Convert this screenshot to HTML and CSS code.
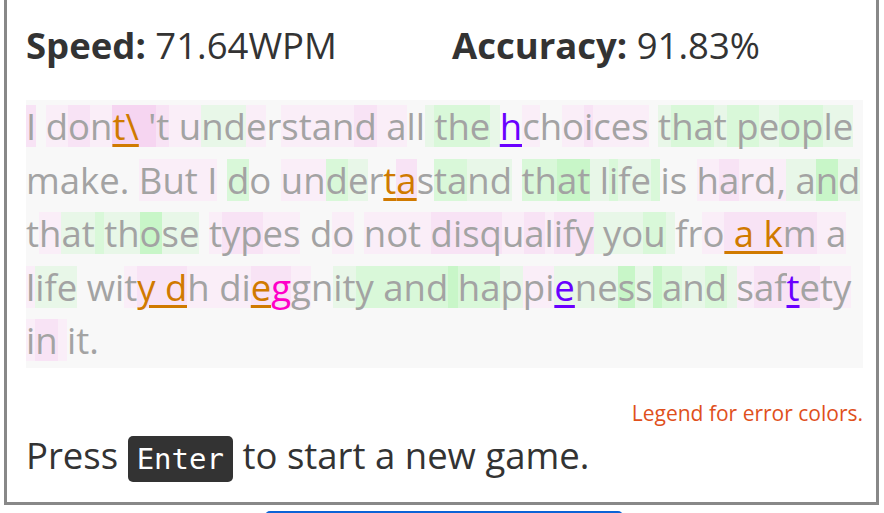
FILE: index.html
```html
<!DOCTYPE html>
<html lang="en">
<head>
<meta charset="utf-8">
<title>Typing results</title>
<link rel="stylesheet" href="styles.css">
</head>
<body>
<main class="card">
  <div class="stats">
    <div class="stat"><b>Speed:</b> 71.64WPM</div>
    <div class="stat"><b>Accuracy:</b> 91.83%</div>
  </div>
  <div class="typed">
    <div class="line"><span class="p2">I</span><span> </span><span class="p1">d</span><span class="p2">o</span><span class="p1">n</span><span class="p3 eo">t\</span><span class="p3"> '</span><span class="p2">t</span><span class="p1"> u</span><span class="g1">nd</span><span class="p1">e</span><span>r</span><span class="p1">stan</span><span class="p2">d</span><span class="p1"> a</span><span>ll</span><span class="g1"> </span><span class="g2">the</span><span class="g1"> </span><span class="ev">h</span><span class="p1">c</span><span>h</span><span class="p1">o</span><span class="p2">i</span><span class="p1">ces</span><span> </span><span class="g1">t</span><span class="g2">ha</span><span class="g1">t</span><span class="g2"> p</span><span class="g1">e</span><span class="g2">op</span><span class="g1">le</span></div>
    <div class="line"><span>make. </span><span class="p1">But I</span><span> </span><span class="g2">d</span><span>o </span><span class="p1">un</span><span class="g2">d</span><span class="g1">e</span><span>r</span><span class="eo">t</span><span class="p2 eo">a</span><span>s</span><span class="g2">ta</span><span class="g1">nd</span><span> </span><span class="g2">th</span><span class="g3">at</span><span class="g1"> l</span><span class="g2">i</span><span class="g1">fe</span><span class="g2"> </span><span>is </span><span class="p1">h</span><span class="p2">a</span><span class="p1">rd,</span><span class="g1"> a</span><span class="g3">n</span><span class="g1">d</span></div>
    <div class="line"><span>t</span><span class="p1">h</span><span class="g1">at</span><span class="g2"> </span><span class="g1">th</span><span class="g3">o</span><span class="g1">se</span><span> </span><span class="p1">t</span><span class="p2">yp</span><span class="p1">es</span><span> d</span><span class="p1">o</span><span> </span><span class="p1">not </span><span class="p2">disq</span><span class="p1">u</span><span class="p2">a</span><span class="p1">l</span><span class="p2">ify</span><span class="g1"> yo</span><span class="g2">u</span><span class="g1"> </span><span>fr</span><span class="p1">o</span><span class="p2 eo"> a k</span><span class="p2">m</span><span class="p1"> a</span></div>
    <div class="line"><span class="p1">l</span><span class="g1">ife</span><span> wi</span><span class="p1">t</span><span class="p2 eo">y d</span><span class="p1">h di</span><span class="p2 eo">e</span><span class="p2 em">g</span><span class="p1">g</span><span>n</span><span class="g1">it</span><span class="g2">y and</span><span class="g3"> </span><span class="g2">ha</span><span class="g1">p</span><span class="p1">pi</span><span class="g1 ev">e</span><span class="g1">ne</span><span class="g3">s</span><span class="g1">s</span><span class="g3"> </span><span class="g2">a</span><span class="g1">n</span><span class="g2">d</span><span class="g1"> </span><span class="p1">s</span><span class="p2">af</span><span class="p2 ev">t</span><span class="p2">e</span><span class="p1">ty</span></div>
    <div class="line"><span class="p1">i</span><span class="p2">n</span><span class="p1"> </span><span>it.</span></div>
  </div>
  <p class="legend">Legend for error colors.</p>
  <p class="prompt">Press <kbd>Enter</kbd> to start a new game.</p>
</main>
<div class="actions"><button class="primary" type="button" aria-label="New game"></button></div>
</body>
</html>
```

FILE: styles.css
```css
html, body {
  margin: 0;
  padding: 0;
  background: #fff;
  overflow: hidden;
}

body {
  font-family: "Open Sans", "Noto Sans", sans-serif;
  color: #333;
}

.card {
  width: 875px;
  box-sizing: border-box;
  margin: -3px 0 0 4px;
  border: 3px solid #888;
  padding: 24px 13px 20px 19px;
}

.stats {
  display: grid;
  grid-template-columns: 426px 1fr;
  font-size: 36.5px;
  line-height: 43px;
  color: #333;
}

.stat b {
  font-weight: 700;
}

.typed {
  margin-top: 33px;
  background: #f8f8f8;
  font-size: 36.5px;
  color: #a3a3a3;
}

.line {
  height: 53.6px;
  line-height: 53.6px;
  white-space: nowrap;
}

.line span {
  display: inline-block;
  white-space: pre;
  line-height: 42px;
}

.p1 { background: #faeef8; }
.p2 { background: #f8e3f5; }
.p3 { background: #f6d5f1; }
.g1 { background: #e8f7e8; }
.g2 { background: #d9f8d9; }
.g3 { background: #c8f6c8; }

.eo,
.ev {
  text-decoration: underline;
  text-decoration-thickness: 3px;
  text-underline-offset: 4px;
}

.line .eo { color: #d07a00; }
.line .ev { color: #6a00ff; }
.line .em { color: #ff00c8; }

.legend {
  margin: 31px 0 0;
  text-align: right;
  font-size: 21px;
  line-height: 28px;
  color: #e0501c;
}

.prompt {
  margin: 4px 0 0;
  font-size: 36.5px;
  line-height: 48px;
  color: #333;
}

kbd {
  display: inline-block;
  font-family: "DejaVu Sans Mono", monospace;
  font-size: 29px;
  line-height: 34px;
  padding: 6px 9px;
  background: #333;
  color: #fff;
  border-radius: 5px;
}

.actions {
  display: flex;
  justify-content: center;
  margin-top: 6px;
  padding-left: 4px;
}

.primary {
  width: 358px;
  height: 40px;
  border: none;
  border-radius: 5px;
  background: #0b63d6;
}
```
